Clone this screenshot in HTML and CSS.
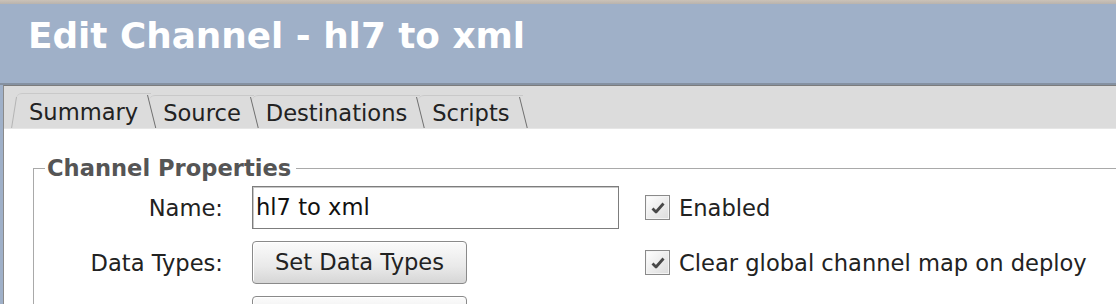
FILE: index.html
```html
<!DOCTYPE html>
<html>
<head>
<meta charset="utf-8">
<link rel="stylesheet" href="styles.css">
</head>
<body>
<div class="window">
  <div class="topstrip"></div>
  <header class="titlebar"><h1 class="title">Edit Channel - hl7 to xml</h1></header>
  <div class="panel">
    <div class="tabs">
      <div class="tab selected">Summary</div>
      <div class="tab">Source</div>
      <div class="tab">Destinations</div>
      <div class="tab">Scripts</div>
    </div>
    <div class="content">
      <fieldset class="group">
        <legend class="group-title">Channel Properties</legend>
        <div class="form">
          <label class="label">Name:</label>
          <div class="field">hl7 to xml</div>
          <div class="check"><span class="box"><svg width="16" height="14" viewBox="0 0 16 14"><path d="M2.5 7.5 L6 11 L13.5 2.5" fill="none" stroke="#484848" stroke-width="2.8" stroke-linejoin="round"/></svg></span><span class="check-text">Enabled</span></div>

          <label class="label">Data Types:</label>
          <div class="button">Set Data Types</div>
          <div class="check"><span class="box"><svg width="16" height="14" viewBox="0 0 16 14"><path d="M2.5 7.5 L6 11 L13.5 2.5" fill="none" stroke="#484848" stroke-width="2.8" stroke-linejoin="round"/></svg></span><span class="check-text">Clear global channel map on deploy</span></div>

          <label class="label"></label>
          <div class="button">&nbsp;</div>
          <div></div>
        </div>
      </fieldset>
    </div>
  </div>
</div>
</body>
</html>
```

FILE: styles.css
```css
html, body {
  margin: 0;
  padding: 0;
}
body {
  width: 1116px;
  height: 304px;
  overflow: hidden;
  font-family: "DejaVu Sans", sans-serif;
  background: #9fb0c8;
}
.window {
  display: flex;
  flex-direction: column;
  height: 304px;
  overflow: hidden;
}
.topstrip {
  flex-shrink: 0;
  height: 4px;
  background: linear-gradient(#cbc2b8, #b9b3ad);
}
.titlebar {
  flex-shrink: 0;
  height: 81px;
  box-sizing: border-box;
  padding: 11px 0 0 28px;
  background: #9fb0c8;
  border-bottom: 2px solid #8591a1;
}
.title {
  margin: 0;
  font-size: 35.8px;
  font-weight: bold;
  color: #ffffff;
  line-height: 41px;
}
.panel {
  flex: 1 0 auto;
  margin-left: 3px;
  border-left: 1px solid #8a8a8a;
  border-top: 1px solid #7c7c7c;
  display: flex;
  flex-direction: column;
  background: #ffffff;
}
.tabs {
  flex-shrink: 0;
  height: 43px;
  box-sizing: border-box;
  display: flex;
  align-items: flex-end;
  padding-left: 12px;
  background: #dcdcdc;
  border-bottom: 1px solid #e6e6e6;
}
.tab {
  position: relative;
  height: 33px;
  box-sizing: border-box;
  padding: 5px 13px 0 14px;
  margin-right: -2px;
  font-size: 22.6px;
  line-height: 24px;
  color: #222;
  border-top: 1px solid #c9c9c9;
  border-top-left-radius: 6px;
}
.tab::after {
  content: "";
  position: absolute;
  right: 3px;
  top: 1px;
  bottom: 0;
  border-right: 1px solid #6f6f6f;
  transform: skewX(14deg);
  transform-origin: top;
}
.tab.selected {
  height: 35px;
  padding-top: 6px;
  padding-left: 13px;
}
.tab.selected::before {
  content: "";
  position: absolute;
  left: 0;
  top: 3px;
  bottom: 0;
  border-left: 1px solid #b4b4b4;
  transform: skewX(-9deg);
  transform-origin: top;
}
.content {
  flex: 1;
  background: #ffffff;
  padding: 27px 0 0 29px;
}
.group {
  margin: 0 -30px 0 0;
  padding: 0 0 40px 0;
  border: 1px solid #a9a9a9;
  border-bottom: none;
}
.group-title {
  margin-left: 11px;
  padding: 0 5px 0 2px;
  font-size: 22.6px;
  font-weight: bold;
  color: #555555;
  line-height: 24px;
}
.form {
  display: grid;
  grid-template-columns: 189px 367px auto;
  column-gap: 29px;
  row-gap: 12px;
  align-items: center;
  padding-top: 6px;
}
.label {
  text-align: right;
  font-size: 22.6px;
  color: #222;
}
.field {
  height: 43px;
  box-sizing: border-box;
  border: 1px solid #7d7d7d;
  box-shadow: inset 1px 1px 0 #c8c8c8;
  padding: 0 0 0 3px;
  font-size: 22.6px;
  line-height: 40px;
  color: #111;
  background: #fff;
}
.button {
  width: 215px;
  height: 43px;
  box-sizing: border-box;
  border: 1px solid #8a8a8a;
  border-radius: 4px;
  background: linear-gradient(#fbfbfb, #e9e9e9 60%, #d6d6d6);
  box-shadow: inset 1px 1px 0 #ffffff;
  text-align: center;
  font-size: 22.6px;
  line-height: 40px;
  color: #222;
}
.check {
  display: flex;
  align-items: center;
  gap: 9px;
  margin-left: -3px;
  font-size: 22.6px;
  color: #222;
}
.box {
  width: 25px;
  height: 25px;
  box-sizing: border-box;
  border: 1px solid #8a8a8a;
  background: linear-gradient(135deg, #ffffff, #dcdcdc);
  box-shadow: inset 0 0 0 1px #f4f4f4;
  display: flex;
  align-items: center;
  justify-content: center;
}
```
